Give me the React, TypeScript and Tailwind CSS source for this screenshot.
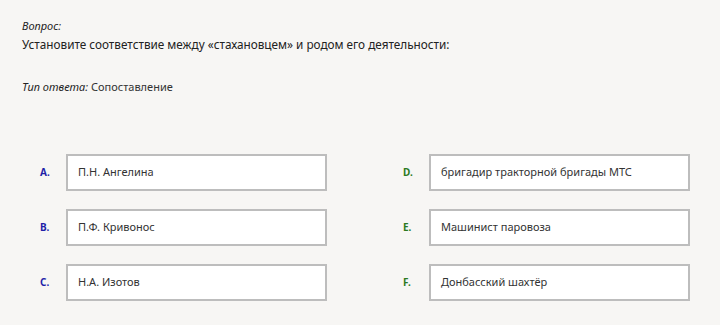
export default function App() {
  const left = [
    { key: "A.", text: "П.Н. Ангелина" },
    { key: "B.", text: "П.Ф. Кривонос" },
    { key: "C.", text: "Н.А. Изотов" },
  ];
  const right = [
    { key: "D.", text: "бригадир тракторной бригады МТС" },
    { key: "E.", text: "Машинист паровоза" },
    { key: "F.", text: "Донбасский шахтёр" },
  ];

  return (
    <div className="h-[325px] w-[720px] bg-[#f7f6f4] font-['Noto_Sans',sans-serif] text-[#222]">
      <div className="px-[22px] pt-[18px]">
        <div className="text-[11px] italic leading-[16px]">Вопрос:</div>
        <div className="text-[11.75px] leading-[20px]">
          Установите соответствие между «стахановцем» и родом его деятельности:
        </div>
        <div className="mt-[25px] text-[11px] leading-[16px]">
          <span className="italic">Тип ответа:</span>{" "}
          <span className="text-[#333]">Сопоставление</span>
        </div>
      </div>

      <div className="mt-[59px] flex justify-between pl-[40px] pr-[30px]">
        <div className="flex flex-col gap-[18px]">
          {left.map((item) => (
            <div key={item.key} className="flex items-center">
              <span className="w-[26px] text-[10px] font-bold text-[#1f1fa8]">{item.key}</span>
              <div className="flex h-[37px] w-[261px] items-center border-2 border-[#bdbdbd] bg-white px-[10px] text-[11px] text-[#333]">
                {item.text}
              </div>
            </div>
          ))}
        </div>
        <div className="flex flex-col gap-[18px]">
          {right.map((item) => (
            <div key={item.key} className="flex items-center">
              <span className="w-[26px] text-[10px] font-bold text-[#2b7a1f]">{item.key}</span>
              <div className="flex h-[37px] w-[261px] items-center border-2 border-[#bdbdbd] bg-white px-[10px] text-[11px] text-[#333]">
                {item.text}
              </div>
            </div>
          ))}
        </div>
      </div>
    </div>
  );
}
